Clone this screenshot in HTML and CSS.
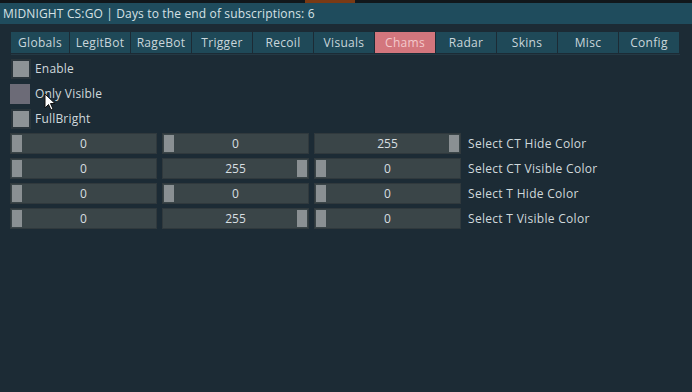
FILE: index.html
```html
<!DOCTYPE html>
<html lang="en">
<head>
    <meta charset="UTF-8">
    <title>MIDNIGHT CS:GO</title>
    <link rel="stylesheet" href="styles.css">
</head>
<body>
    <div class="game-strip">
        <span class="glow"></span>
    </div>
    <div class="titlebar">MIDNIGHT CS:GO | Days to the end of subscriptions: 6</div>
    <nav class="tabs">
        <a class="tab first">Globals</a>
        <a class="tab">LegitBot</a>
        <a class="tab">RageBot</a>
        <a class="tab">Trigger</a>
        <a class="tab">Recoil</a>
        <a class="tab">Visuals</a>
        <a class="tab active">Chams</a>
        <a class="tab">Radar</a>
        <a class="tab">Skins</a>
        <a class="tab">Misc</a>
        <a class="tab">Config</a>
    </nav>
    <div class="panel">
        <label class="check"><span class="box"></span>Enable</label>
        <label class="check hover"><span class="box"></span>Only Visible</label>
        <label class="check"><span class="box"></span>FullBright</label>

        <div class="color-row">
            <div class="slider"><span class="thumb"></span>0</div>
            <div class="slider"><span class="thumb"></span>0</div>
            <div class="slider"><span class="thumb max"></span>255</div>
            <span class="row-label">Select CT Hide Color</span>
        </div>
        <div class="color-row">
            <div class="slider"><span class="thumb"></span>0</div>
            <div class="slider"><span class="thumb max"></span>255</div>
            <div class="slider"><span class="thumb"></span>0</div>
            <span class="row-label">Select CT Visible Color</span>
        </div>
        <div class="color-row">
            <div class="slider"><span class="thumb"></span>0</div>
            <div class="slider"><span class="thumb"></span>0</div>
            <div class="slider"><span class="thumb"></span>0</div>
            <span class="row-label">Select T Hide Color</span>
        </div>
        <div class="color-row">
            <div class="slider"><span class="thumb"></span>0</div>
            <div class="slider"><span class="thumb max"></span>255</div>
            <div class="slider"><span class="thumb"></span>0</div>
            <span class="row-label">Select T Visible Color</span>
        </div>
    </div>
    <svg class="cursor" width="12" height="18" viewBox="0 0 12 18">
        <path d="M1 1 L1 15 L4.5 11.5 L7 17 L9 16 L6.5 10.5 L11 10.5 Z" fill="#fff" stroke="#111" stroke-width="1"/>
    </svg>
</body>
</html>
```

FILE: styles.css
```css
body {
    margin: 0;
    background: #1c2b35;
    color: #d3dde1;
    font-family: 'Open Sans', Arial, sans-serif;
    font-size: 12px;
    height: 392px;
    overflow: hidden;
    position: relative;
}
.game-strip {
    height: 3px;
    background: #11171b;
    display: flex;
}
.game-strip .glow {
    margin-left: 305px;
    width: 50px;
    background: #7a3a14;
}
.titlebar {
    height: 21px;
    line-height: 21px;
    background: #1f4c5d;
    padding-left: 3px;
    font-size: 12px;
    color: #d6e1e5;
    letter-spacing: 0.15px;
}
.tabs {
    display: flex;
    gap: 1px;
    margin: 8px 0 0 11px;
    padding-bottom: 1px;
    border-bottom: 1px solid #243944;
    width: 669px;
}
.tab {
    flex: 0 0 60px;
    height: 21px;
    line-height: 21px;
    text-align: center;
    background: #1f4958;
    color: #c9d6db;
    letter-spacing: 0.3px;
}
.tab.first {
    flex-basis: 58px;
}
.tab.active {
    background: #d3767d;
    color: #f3c9cc;
}
.panel {
    padding: 1px 0 0 10px;
}
.check {
    display: flex;
    align-items: center;
    height: 25px;
    gap: 4px;
    color: #d0d9dc;
    letter-spacing: 0.2px;
}
.check .box {
    width: 16px;
    height: 16px;
    background: #8d9396;
    border: 2px solid #2a353b;
    margin-left: 1px;
}
.check.hover .box {
    width: 20px;
    height: 20px;
    margin: 0 1px 0 0;
    border: 0;
    background: #6c6b77;
}
.color-row {
    display: flex;
    align-items: center;
    gap: 5px;
    height: 25px;
}
.slider {
    position: relative;
    flex: 0 0 147px;
    height: 21px;
    line-height: 21px;
    background: #3a4548;
    box-shadow: inset 0 0 0 1px #30393d;
    text-align: center;
    color: #d8dfe1;
}
.thumb {
    position: absolute;
    left: 2px;
    top: 2px;
    width: 10px;
    height: 17px;
    background: #8a9093;
}
.thumb.max {
    left: auto;
    right: 2px;
}
.row-label {
    margin-left: 2px;
    color: #d0d9dc;
    letter-spacing: 0.3px;
}
.cursor {
    position: absolute;
    left: 44px;
    top: 93px;
}
```
